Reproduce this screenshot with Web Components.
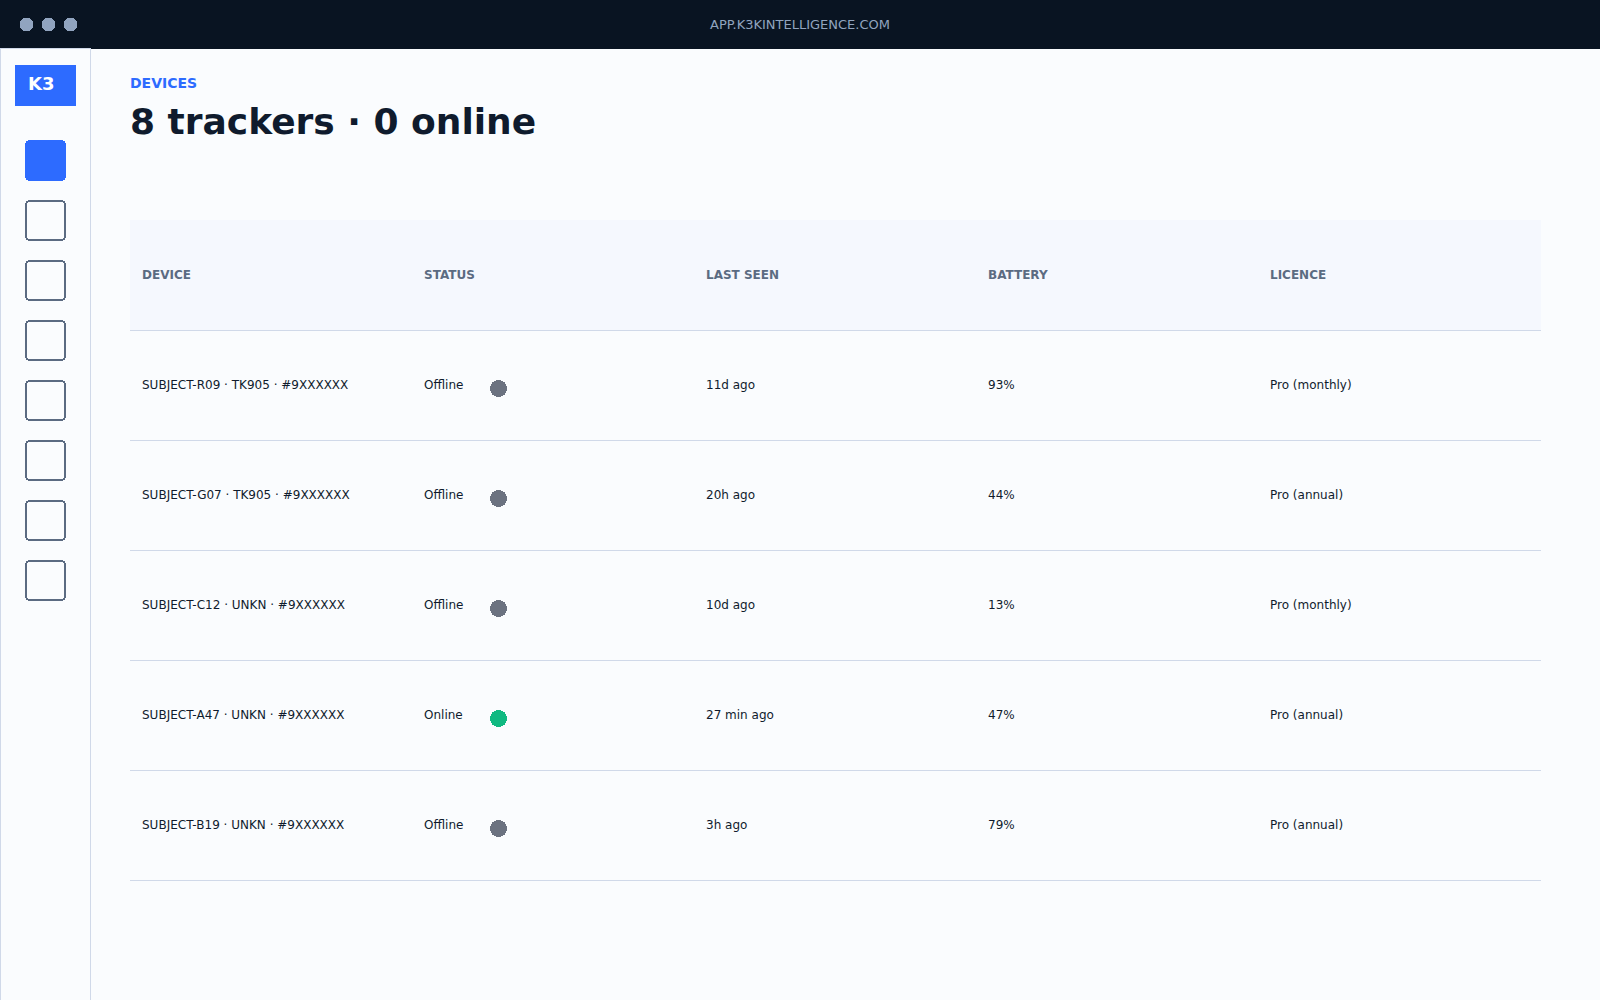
<!DOCTYPE html>
<html lang="en">
<head>
<meta charset="utf-8">
<title>Devices</title>
<style>
html,body{margin:0;height:100%;overflow:hidden}
body{font-family:"DejaVu Sans",sans-serif;color:#0f1b2d;background:#fafcfe}
</style>
</head>
<body>
<device-app></device-app>
<script>
const define = (name, html, setup) => {
  const t = document.createElement('template');
  t.innerHTML = html;
  customElements.define(name, class extends HTMLElement {
    constructor() {
      super();
      this.attachShadow({mode: 'open'}).append(t.content.cloneNode(true));
    }
    connectedCallback() { if (setup) setup(this, this.shadowRoot); }
  });
};

define('window-dots', `<style>:host{display:block;width:57px;height:13px}svg{display:block}</style>
<svg width="57" height="13" fill="#91a4bf" shape-rendering="crispEdges">
<path id="d" d="M3 0h7v1h1v1h1v1h1v7h-1v1h-1v1h-1v1h-7v-1h-1v-1h-1v-1h-1v-7h1v-1h1v-1h1z"/>
<use href="#d" x="22"/><use href="#d" x="44"/></svg>`);

define('title-bar', `<style>
:host{display:grid;grid-template-columns:1fr auto 1fr;height:49px;box-sizing:border-box;background:#091422;color:#91a4bf;font-size:13px;line-height:15px;padding:0 20px}
window-dots{margin-top:18px}
.url{margin-top:17px}
</style><window-dots></window-dots><div class="url"><slot></slot></div>`);

define('nav-tile', `<style>:host{display:block;width:41px;height:41px}svg{display:block}
.fill{display:none}:host([active]) .fill{display:block}:host([active]) .line{display:none}</style>
<svg width="41" height="41" shape-rendering="crispEdges">
<path class="fill" fill="#2d6bff" d="M3 0h35v1h2v2h1v35h-1v2h-2v1h-35v-1h-2v-2h-1v-35h1v-2h2z"/>
<path class="line" fill="#5b6b82" fill-rule="evenodd" d="M3 0h35v1h2v2h1v35h-1v2h-2v1h-35v-1h-2v-2h-1v-35h1v-2h2zM3 2v1h-1v35h1v1h35v-1h1v-35h-1v-1z"/>
</svg>`);

define('side-rail', `<style>
:host{display:flex;flex-direction:column;align-items:center;box-sizing:border-box;width:91px;margin-top:-1px;border:1px solid #d0d9e9;border-bottom:0;background:#fafcfe;padding-top:16px}
.logo{box-sizing:border-box;width:61px;height:41px;background:#2d6bff;color:#fff;font-weight:700;font-size:18px;line-height:20px;padding:9px 0 0 13px}
nav{display:flex;flex-direction:column;gap:19px;margin-top:34px}
</style><div class="logo">K3</div><nav><slot></slot></nav>`);

define('page-heading', `<style>:host{display:block;height:171px}
.eyebrow{padding-top:26px;font-size:14px;line-height:16px;font-weight:700;color:#2d6bff}
h1{margin:10px 0 0;font-size:36px;line-height:42px;font-weight:700}
</style><div class="eyebrow"><slot name="eyebrow"></slot></div><h1><slot></slot></h1>`);

define('status-cell', `<style>:host{display:flex;align-items:flex-start}
span{width:66px}svg{display:block;margin-top:2px;fill:#6b7280}:host([online]) svg{fill:#10b981}</style>
<span><slot></slot></span>
<svg width="17" height="17" shape-rendering="crispEdges"><path d="M6 0h5v1h2v1h2v2h1v2h1v5h-1v2h-1v2h-2v1h-2v1h-5v-1h-2v-1h-2v-2h-1v-2h-1v-5h1v-2h1v-2h2v-1h2z"/></svg>`);

define('device-row', `<style>
:host{display:grid;grid-template-columns:repeat(5,282px);box-sizing:border-box;height:110px;border-top:1px solid #d0d9e9;padding-top:47px;font-size:12px;line-height:14px;white-space:nowrap}
:host([head]){border-top:0;padding-top:48px;background:#f5f8fe;color:#5b6b82;font-weight:700}
.cell{padding-left:12px}
</style>`, (el, root) => {
  el.getAttribute('cells').split('|').forEach((text, i) => {
    const cell = document.createElement('div');
    cell.className = 'cell';
    if (i === 1 && !el.hasAttribute('head')) {
      const s = document.createElement('status-cell');
      s.toggleAttribute('online', text === 'Online');
      s.textContent = text;
      cell.append(s);
    } else cell.textContent = text;
    root.append(cell);
  });
});

define('device-table', `<style>:host{display:block;width:1411px;border-bottom:1px solid #d0d9e9}
device-row{width:1411px}</style>
<device-row head cells="DEVICE|STATUS|LAST SEEN|BATTERY|LICENCE"></device-row>
<device-row cells="SUBJECT-R09 · TK905 · #9XXXXXX|Offline|11d ago|93%|Pro (monthly)"></device-row>
<device-row cells="SUBJECT-G07 · TK905 · #9XXXXXX|Offline|20h ago|44%|Pro (annual)"></device-row>
<device-row cells="SUBJECT-C12 · UNKN · #9XXXXXX|Offline|10d ago|13%|Pro (monthly)"></device-row>
<device-row cells="SUBJECT-A47 · UNKN · #9XXXXXX|Online|27 min ago|47%|Pro (annual)"></device-row>
<device-row cells="SUBJECT-B19 · UNKN · #9XXXXXX|Offline|3h ago|79%|Pro (annual)"></device-row>`);

define('device-app', `<style>:host{display:flex;flex-direction:column;height:100vh}
.body{flex:1;display:flex}main{padding-left:39px}</style>
<title-bar>APP.K3KINTELLIGENCE.COM</title-bar>
<div class="body">
<side-rail><nav-tile active></nav-tile><nav-tile></nav-tile><nav-tile></nav-tile><nav-tile></nav-tile><nav-tile></nav-tile><nav-tile></nav-tile><nav-tile></nav-tile><nav-tile></nav-tile></side-rail>
<main><page-heading><span slot="eyebrow">DEVICES</span>8 trackers · 0 online</page-heading><device-table></device-table></main>
</div>`);
</script>
</body>
</html>
